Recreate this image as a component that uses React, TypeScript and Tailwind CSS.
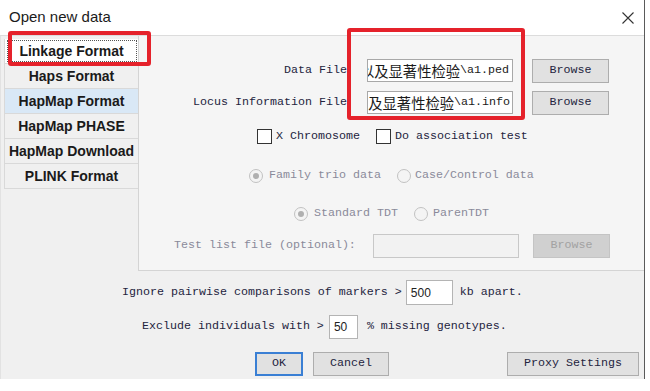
const mono = "font-['Liberation_Mono',monospace] text-[11.67px] leading-none"
const cjk = "font-['Noto_Sans_CJK_SC',sans-serif] text-[14.3px]"

const tabs = [
  { label: 'Linkage Format', state: 'selected' },
  { label: 'Haps Format', state: '' },
  { label: 'HapMap Format', state: 'hover' },
  { label: 'HapMap PHASE', state: '' },
  { label: 'HapMap Download', state: '' },
  { label: 'PLINK Format', state: '' },
]

function Browse({ disabled = false }: { disabled?: boolean }) {
  return (
    <div
      className={`ml-[19px] flex h-[24px] w-[77px] items-center justify-center border ${mono} ${
        disabled
          ? 'border-[#c4c4c4] bg-[#d0d0d0] text-[#a2a2a2]'
          : 'border-[#adadad] bg-[#e1e1e1] text-[#24243e]'
      }`}
    >
      Browse
    </div>
  )
}

function PathInput({ head, tail, pr }: { head: string; tail: string; pr: string }) {
  return (
    <div
      className={`ml-[20px] flex h-[23px] w-[146px] items-center justify-end overflow-hidden whitespace-nowrap border border-[#a8a8a8] bg-white text-[#1a1a1a] ${pr}`}
    >
      <span className={`shrink-0 ${cjk}`}>{head}</span>
      <span className={`shrink-0 ${mono}`}>{tail}</span>
    </div>
  )
}

function Radio({ checked }: { checked: boolean }) {
  return (
    <span className="flex h-[14px] w-[14px] shrink-0 items-center justify-center rounded-full border border-[#c2c2c2] bg-[#f4f4f4]">
      {checked ? <span className="h-[6px] w-[6px] rounded-full bg-[#b0b0b0]" /> : null}
    </span>
  )
}

function Check({ className = '' }: { className?: string }) {
  return <span className={`block h-[15px] w-[15px] shrink-0 border border-[#333] bg-white ${className}`} />
}

export default function App() {
  return (
    <div className="relative flex h-[391px] w-[650px] bg-white font-['Liberation_Sans',sans-serif]">
      <div className="flex h-[379px] w-[645px] flex-col border-r border-[#5a5a5a]">
        {/* title bar */}
        <div className="flex h-[36px] shrink-0 items-center justify-between border-b border-[#dcdcdc] bg-white pl-[9px] pr-[10px]">
          <span className="text-[15px] text-[#1b1b1b]">Open new data</span>
          <svg width="12" height="12" viewBox="0 0 12 12">
            <path d="M0.5 0.5 L11.5 11.5 M11.5 0.5 L0.5 11.5" stroke="#333" strokeWidth="1.1" />
          </svg>
        </div>

        <div className="flex flex-1 flex-col border-l border-[#e2e2e2] bg-[#f0f0f0]">
          {/* tabs + panel */}
          <div className="flex h-[235px] shrink-0">
            <div className="ml-[3px] flex w-[134px] flex-col pt-[3px]">
              {tabs.map((t) => (
                <div
                  key={t.label}
                  className={`flex h-[25px] items-center justify-center border-b border-l border-[#d9d9d9] text-[14px] font-bold text-[#1a1a1a] ${
                    t.state === 'selected'
                      ? 'bg-white'
                      : t.state === 'hover'
                        ? 'bg-[#d9e8f6]'
                        : 'bg-[#f0f0f0]'
                  }`}
                >
                  {t.state === 'selected' ? (
                    <span className="flex h-[22px] w-[130px] items-center justify-center border border-dotted border-[#555]">
                      {t.label}
                    </span>
                  ) : (
                    t.label
                  )}
                </div>
              ))}
            </div>

            <div className="flex flex-1 flex-col border-b border-l border-[#d4d4d4] bg-[#f5f5f5] pt-[23px] text-[#24243e]">
              <div className="flex h-[23px] items-center">
                <span className={`w-[208px] text-right ${mono}`}>Data File</span>
                <PathInput head="分析以及显著性检验" tail="\a1.ped" pr="pr-[3px]" />
                <Browse />
              </div>
              <div className="mt-[9px] flex h-[23px] items-center">
                <span className={`w-[208px] text-right ${mono}`}>Locus Information File</span>
                <PathInput head="以及显著性检验" tail="\a1.info" pr="pr-[2px]" />
                <Browse />
              </div>
              <div className="mt-[15px] flex h-[15px] items-center pl-[118px]">
                <Check />
                <span className={`ml-[4px] ${mono}`}>X Chromosome</span>
                <Check className="ml-[16px]" />
                <span className={`ml-[4px] ${mono}`}>Do association test</span>
              </div>
              <div className="mt-[25px] flex h-[14px] items-center pl-[110px] text-[#8a8a9a]">
                <Radio checked />
                <span className={`ml-[6px] ${mono}`}>Family trio data</span>
                <span className="ml-[16px]">
                  <Radio checked={false} />
                </span>
                <span className={`ml-[4px] ${mono}`}>Case/Control data</span>
              </div>
              <div className="mt-[24px] flex h-[14px] items-center pl-[155px] text-[#8a8a9a]">
                <Radio checked />
                <span className={`ml-[6px] ${mono}`}>Standard TDT</span>
                <span className="ml-[16px]">
                  <Radio checked={false} />
                </span>
                <span className={`ml-[5px] ${mono}`}>ParenTDT</span>
              </div>
              <div className="mt-[13px] flex h-[24px] items-center pl-[35px]">
                <span className={`w-[182px] text-[#8a8a9a] ${mono}`}>Test list file (optional):</span>
                <div className="ml-[17px] h-[24px] w-[146px] border border-[#c8c8c8] bg-[#f2f2f2]" />
                <span className="-ml-[5px]">
                  <Browse disabled />
                </span>
              </div>
            </div>
          </div>

          {/* options */}
          <div className="mt-[9px] flex h-[25px] items-center pl-[121px] text-[#24243e]">
            <span className={mono}>Ignore pairwise comparisons of markers &gt;</span>
            <div className="ml-[4px] flex h-[25px] w-[47px] items-center border border-[#b4b4b4] bg-white pl-[4px] text-[12px] text-[#222]">
              500
            </div>
            <span className={`ml-[7px] ${mono}`}>kb apart.</span>
          </div>
          <div className="mt-[10px] flex h-[24px] items-center pl-[141px] text-[#24243e]">
            <span className={mono}>Exclude individuals with &gt;</span>
            <div className="ml-[5px] flex h-[24px] w-[29px] items-center border border-[#b4b4b4] bg-white pl-[4px] text-[12px] text-[#222]">
              50
            </div>
            <span className={`ml-[9px] ${mono}`}>% missing genotypes.</span>
          </div>
          <div className="mt-[13px] flex h-[24px] items-center pl-[254px] text-[#24243e]">
            <div className={`flex h-[24px] w-[48px] items-center justify-center border-2 border-[#3a7fd4] bg-[#e1e1e1] ${mono}`}>
              OK
            </div>
            <div className={`ml-[10px] flex h-[24px] w-[76px] items-center justify-center border border-[#adadad] bg-[#e1e1e1] ${mono}`}>
              Cancel
            </div>
            <div className={`ml-[118px] flex h-[24px] w-[132px] items-center justify-center border border-[#adadad] bg-[#e1e1e1] ${mono}`}>
              Proxy Settings
            </div>
          </div>
        </div>
      </div>

      {/* annotation boxes */}
      <div className="absolute left-[8px] top-[31px] h-[35px] w-[143px] rounded-[3px] border-[4px] border-[#e5222b]" />
      <div className="absolute left-[347px] top-[28px] h-[92px] w-[178px] rounded-[3px] border-[4px] border-[#e5222b]" />
    </div>
  )
}
